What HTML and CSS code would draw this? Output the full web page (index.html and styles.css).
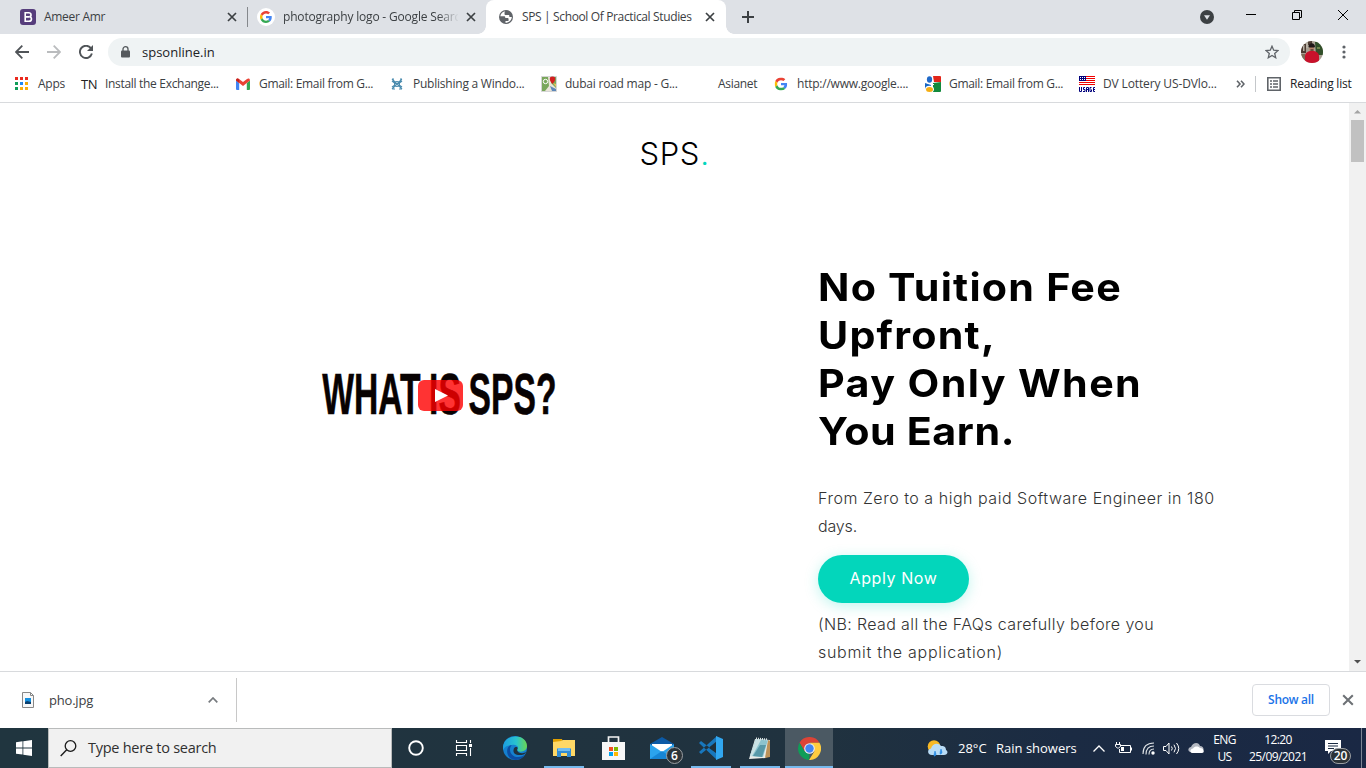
FILE: index.html
```
<!DOCTYPE html>
<html lang="en">
<head>
<meta charset="utf-8">
<title>SPS | School Of Practical Studies</title>
<link rel="stylesheet" href="styles.css">
</head>
<body>
<svg class="defs" width="0" height="0">
  <symbol id="google" viewBox="0 0 48 48">
    <path fill="#ea4335" d="M24 9.500c3.500 0 6.700 1.200 9.200 3.600l6.900-6.900C35.900 2.400 30.500 0 24 0 14.600 0 6.500 5.400 2.600 13.200l8 6.200C12.400 13.700 17.700 9.500 24 9.500z"/>
    <path fill="#4285f4" d="M47 24.500c0-1.600-.2-3.100-.4-4.500H24v9h12.900c-.6 3-2.200 5.500-4.700 7.200l7.700 6C44.400 38 47 31.800 47 24.500z"/>
    <path fill="#fbbc05" d="M10.500 28.600c-.5-1.400-.8-3-.8-4.600s.3-3.100.8-4.600l-8-6.200C.9 16.500 0 20.100 0 24s.9 7.500 2.600 10.800z"/>
    <path fill="#34a853" d="M24 48c6.500 0 11.900-2.100 15.900-5.800l-7.700-6c-2.200 1.500-4.900 2.300-8.200 2.300-6.300 0-11.600-4.200-13.500-9.900l-8 6.200C6.500 42.600 14.600 48 24 48z"/>
  </symbol>
  <symbol id="close" viewBox="0 0 10 10"><path d="M1 1l8 8M9 1l-8 8" stroke="currentColor" stroke-width="1.700" fill="none"/></symbol>
</svg>

<header class="tabstrip">
  <div class="tab">
    <svg class="i16" viewBox="0 0 16 16"><rect width="16" height="16" rx="3" fill="#563d7c"/><path d="M5.200 3.800h3.500c3 0 3 3.700.6 4 3 .3 2.900 4.400-.4 4.400H5.200zM5.200 7.900h3.900" fill="none" stroke="#fff" stroke-width="1.600"/></svg>
    <span class="tab-title first">Ameer Amr</span>
    <svg class="x"><use href="#close"/></svg>
  </div>
  <div class="tab second">
    <span class="disc"><svg><use href="#google"/></svg></span>
    <span class="tab-title fade">photography logo - Google Search</span>
    <svg class="x"><use href="#close"/></svg>
  </div>
  <div class="tab active">
    <svg class="i14" viewBox="0 0 24 24"><circle cx="12" cy="12" r="12" fill="#5f6368"/><path d="M11 2.300c-4.500.6-8 3.700-8.800 8.200h6.500c1.300 0 2 .8 2 2v1.300h4c1 0 1.700.8 1.700 1.800v1.800c0 1-.8 1.600-1.800 1.600h-3.500v3c5.500 0 10.700-4 10.900-10h-2.700c-1.200 0-1.800-.7-1.800-1.800V8.700h-6c-1.300 0-2-.8-2-2V4.500c0-1 .6-1.500 1.500-2.200z" fill="#fff"/></svg>
    <span class="tab-title">SPS | School Of Practical Studies</span>
    <svg class="x"><use href="#close"/></svg>
  </div>
  <svg class="plus" viewBox="0 0 12 12"><path d="M6 0v12M0 6h12" stroke="#3c4043" stroke-width="2"/></svg>
  <div class="winctl">
    <svg width="14" height="14" viewBox="0 0 14 14"><circle cx="7" cy="7" r="7" fill="#3c4043"/><path d="M4 5.300h6L7 9.800z" fill="#dee1e6"/></svg>
    <svg width="10" height="11" viewBox="0 0 10 11"><path d="M0 5.500h10" stroke="#000"/></svg>
    <svg width="10" height="10" viewBox="0 0 10 10"><path d="M.5 2.500h7v7h-7zM2.500 2.500v-2h7v7h-2" fill="none" stroke="#000"/></svg>
    <svg width="10" height="10" viewBox="0 0 10 10"><path d="M0 0l10 10M10 0L0 10" stroke="#000"/></svg>
  </div>
</header>

<nav class="toolbar">
  <svg class="nav" viewBox="0 0 14 14"><path d="M14 7H1M7.300.7L1 7l6.300 6.300" fill="none" stroke="#505458" stroke-width="1.800"/></svg>
  <svg class="nav" viewBox="0 0 14 14"><path d="M0 7h13M6.700.7L13 7l-6.300 6.300" fill="none" stroke="#babcbe" stroke-width="1.800"/></svg>
  <svg class="nav" viewBox="0 0 14 14"><path d="M12.100 3.500A6.100 6.100 0 1 0 12.900 8.500" fill="none" stroke="#505458" stroke-width="1.900"/><path d="M14 0v6H8z" fill="#505458"/></svg>
  <div class="omnibox">
    <svg class="lock" viewBox="0 0 9 12"><rect y="4.500" width="9" height="7" rx="1" fill="#55595d"/><path d="M2 5V3a2.500 2.300 0 0 1 5 0v2" fill="none" stroke="#55595d" stroke-width="1.300"/></svg>
    <span class="url">spsonline.in</span>
    <svg class="star" viewBox="0 0 14 14"><path d="M7 1.200l1.700 4 4.300.4-3.300 2.800 1 4.300L7 10.400l-3.700 2.300 1-4.300L1 5.600l4.300-.4z" fill="none" stroke="#5f6368" stroke-width="1.300"/></svg>
  </div>
  <svg class="avatar" viewBox="0 0 22 22"><clipPath id="av"><circle cx="11" cy="11" r="11"/></clipPath><g clip-path="url(#av)"><path fill="#a9a093" d="M0 0h22v22H0z"/><path fill="#4c3b32" d="M0 3h5v9H0zM7 0h4v4H7z"/><path fill="#b9b2a6" d="M2 4h1.500v6H2zM5 2h2v5H5z"/><path fill="#31502a" d="M14 1h8v13h-7z"/><path fill="#71864c" d="M16 6h3v2h-3z"/><path fill="#b88369" d="M8.500 5h4.500v6H8.500z"/><path fill="#211819" d="M7.500 6c0-5 6.500-5 6.500 0l-1 .5H8.500zM9.500 8.500h3v1h-3z"/><path fill="#c9112b" d="M4 15c0-3 3-4.500 5-5h4c2 .5 5 2 5 5v7H4z"/><path fill="#7d6d58" d="M0 13h4v9H0z"/></g></svg>
  <svg class="dots" viewBox="0 0 4 14"><g fill="#5f6368"><circle cx="2" cy="2" r="1.600"/><circle cx="2" cy="7" r="1.600"/><circle cx="2" cy="12" r="1.600"/></g></svg>
</nav>

<div class="bookmarks">
  <a><svg class="i16" viewBox="0 0 16 16"><path fill="#ea2a1e" d="M1 1h3v3H1zM6 1h3v3H6zM11 1h3v3h-3z"/><path fill="#109d58" d="M1 6h3v3H1zM1 11h3v3H1z"/><path fill="#1e88f5" d="M6 6h3v3H6z"/><path fill="#fbad05" d="M11 6h3v3h-3zM6 11h3v3H6zM11 11h3v3h-3z"/></svg><span>Apps</span></a>
  <a><span class="tn">TN</span><span class="tight">Install the Exchange...</span></a>
  <a class="gmail"><svg class="i16" viewBox="0 0 16 16"><path fill="#4285f4" d="M0 4.500L3.200 7v7H1a1 1 0 0 1-1-1z"/><path fill="#34a853" d="M14 4.500L10.800 7v7H13a1 1 0 0 0 1-1z"/><path fill="#ea4335" d="M0 4.500C0 2 2 2 3 3l4 3 4-3c1-1 3-1 3 1.500L10.800 7 7 10 3.200 7z"/><path fill="#c5221f" d="M0 4.500C0 2.500 2 2 3.200 3.200V7L0 4.500z"/></svg><span class="tight">Gmail: Email from G...</span></a>
  <a><svg class="i16" viewBox="0 0 16 16"><g fill="none" stroke="#4b8caf" stroke-width="1.100"><path d="M3 3l10 10M13 3L3 13M3 5q5 5 10 0M3 11q5-5 10 0M3 3h2M13 3h-2M3 13h3M10 13h3"/><circle cx="8" cy="8" r="2.500"/></g></svg><span>Publishing a Windo...</span></a>
  <a><svg class="i16" viewBox="0 0 16 16"><path fill="#79a75b" d="M1 1h14v14H1z"/><path fill="#e9e4d8" d="M7 1h4l-1 6 5 5v3H9L4 15l4-5z"/><path fill="#5d87b8" d="M9 10l6 3v2h-4z"/><path fill="#e9c25a" d="M12 7l3 1v3z"/><circle cx="4.500" cy="5.500" r="2.200" fill="none" stroke="#fff"/><path fill="#d31f1f" d="M11.500 8C10 6 8.800 5 8.800 3a2.700 2.700 0 0 1 5.400 0c0 2-1.200 3-2.700 5z"/><path d="M.5.500h15v15H.5z" fill="none" stroke="#aaa" stroke-width=".5"/></svg><span>dubai road map - G...</span></a>
  <a><span class="i16"></span><span class="tight">Asianet</span></a>
  <a><svg class="i16" viewBox="-6 -6 60 60"><use href="#google" width="48" height="48"/></svg><span>http://www.google....</span></a>
  <a><svg class="i16" viewBox="0 0 16 16"><path fill="#fff" d="M0 0h16v16H0z"/><path fill="#1967c4" d="M0 7l6 2-1 5H0z"/><path fill="#e22519" d="M8 0h7a1 1 0 0 1 1 1v5H9z"/><path fill="#128a3c" d="M8 7l8-1v9a1 1 0 0 1-1 1H8z"/><ellipse cx="4.500" cy="4" rx="3.600" ry="4" fill="#fff"/><ellipse cx="4.500" cy="3.500" rx="2.600" ry="3.300" fill="#2069c8"/><ellipse cx="4.500" cy="13.300" rx="4.500" ry="3.500" fill="#fff"/><ellipse cx="4.500" cy="13.500" rx="3.500" ry="2.500" fill="#f5ae13"/><path stroke="#fff" d="M6 8.500h3"/></svg><span class="tight">Gmail: Email from G...</span></a>
  <a><svg class="i16" viewBox="0 0 16 16"><path fill="#fff" d="M0 0h16v10H0z"/><path stroke="#f00000" d="M0 .5h16M0 2.500h16M0 4.500h16M0 6.500h16M0 8.500h16"/><path fill="#00007c" d="M0 0h7v5H0z"/><path stroke="#fff" stroke-dasharray="1 1" d="M1 1.500h6M1 3.500h6"/><path d="M.5 11v4.500h2V11M6 11.500H4.500v2H6v2H4M7.500 16v-4.500h2V16M7.500 13.500h2M12.500 11.500h-1.500v4h1.500v-2M16 11.500h-1.500v4H16M14.500 13.500H16" fill="none" stroke="#00007c"/></svg><span class="lottery">DV Lottery US-DVlo...</span></a>
  <svg class="more" viewBox="0 0 9 8"><path d="M1 .8L4 4 1 7.200M5 .8L8 4 5 7.200" fill="none" stroke="#5f6368" stroke-width="1.600"/></svg>
  <a class="reading"><svg width="14" height="14" viewBox="0 0 14 14"><path d="M.8.800h12.400v12.400H.8z" fill="none" stroke="#5f6368" stroke-width="1.600"/><path d="M3 4h2M6 4h5M3 7h2M6 7h5M3 10h2M6 10h5" stroke="#5f6368" stroke-width="1.500"/></svg><span>Reading list</span></a>
</div>

<main class="viewport">
  <div class="page">
    <div class="brand">SPS<i>.</i></div>
    <div class="hero">
      <div class="video">
        <svg viewBox="0 0 260 80" width="260" height="80">
          <text class="poster" transform="scale(.59 1)" y="57"><tspan x="9">WHAT</tspan> <tspan x="190">IS</tspan> <tspan x="257">SPS?</tspan></text>
          <rect x="101" y="23" width="45" height="31" rx="6" fill="#f00" fill-opacity=".8"/><path d="M118 32l13 6.500-13 6.500z" fill="#fff"/>
        </svg>
      </div>
      <div class="copy">
        <h1><span class="l1">No Tuition Fee</span><span class="l2">Upfront,</span><span class="l3">Pay Only When</span><span class="l4">You Earn.</span></h1>
        <p class="lead">From Zero to a high paid Software Engineer in 180 <br><span class="days">days.</span></p>
        <a class="apply">Apply Now</a>
        <p class="note">(NB: Read all the FAQs carefully before you<br><span class="submit">submit the application)</span></p>
      </div>
    </div>
  </div>
  <div class="scrollbar">
    <svg viewBox="0 0 17 17"><path d="M5 10.500h7L8.500 7z" fill="#a3a3a3"/></svg>
    <div class="thumb"></div>
    <svg viewBox="0 0 17 17"><path d="M5 6h7L8.500 9.500z" fill="#505050"/></svg>
  </div>
</main>

<section class="downloads">
  <div class="file">
    <svg width="12" height="16" viewBox="0 0 12 16"><path d="M.5.500h8l3 3v12H.5z" fill="#f8f8f8" stroke="#888"/><path d="M8.500.500v3h3" fill="none" stroke="#888"/><path d="M3 6h6v6H3z" fill="#1590e0"/><path d="M3 10l2-1 4 1v2H3z" fill="#0b3f6e"/></svg>
    <span class="fname">pho.jpg</span>
    <svg width="10" height="6" viewBox="0 0 10 6"><path d="M.7 5.300L5 1l4.300 4.300" fill="none" stroke="#767a7e" stroke-width="1.700"/></svg>
  </div>
  <button class="showall">Show all</button>
  <svg class="shelf-x"><use href="#close"/></svg>
</section>

<footer class="taskbar">
  <div class="start"><svg width="16" height="16" viewBox="0 0 16 16"><path fill="#fff" d="M0 2.200L6.500 1.300V7.500H0zM7.300 1.200L16 0v7.500H7.300zM0 8.400h6.500v6.200L0 13.700zM7.300 8.400H16V16l-8.700-1.200z"/></svg></div>
  <div class="search"><svg width="17" height="17" viewBox="0 0 17 17"><circle cx="10.500" cy="6" r="5.300" fill="none" stroke="#1b1b1b" stroke-width="1.300"/><path d="M6.700 9.800L.7 16" stroke="#1b1b1b" stroke-width="1.400"/></svg><span>Type here to search</span></div>
  <div class="apps">
    <div class="app"><svg width="16" height="16" viewBox="0 0 16 16"><circle cx="8" cy="8" r="6.800" fill="none" stroke="#fff" stroke-width="1.900"/></svg></div>
    <div class="app"><svg width="18" height="16" viewBox="0 0 18 16"><path d="M1.500 0v2.500h10V0M1.500 16v-2.500h10V16M1.500 5.500h10v5h-10zM15.500 0v3M15.500 8v8" fill="none" stroke="#fff" stroke-width="1.100"/><path d="M14 4h3v3h-3z" fill="#fff"/></svg></div>
    <div class="app edge"><svg width="24" height="24" viewBox="0 0 24 24"><defs><linearGradient id="eb"><stop stop-color="#1b9de2"/><stop offset=".55" stop-color="#29c3cf"/><stop offset="1" stop-color="#6ad751"/></linearGradient></defs><circle cx="12" cy="12" r="12" fill="#1580cf"/><path d="M0 12C0-3 24-3 24 10c0 6-8 7-10 4 3-3-1-6-5-5-4 .5-7 1-9 5z" fill="url(#eb)"/><path d="M9 9c-4 3-2 12 6 12 3 0 6-1 7-3-3 6-9 7-13 5-7-3-6-14 0-14z" fill="#0c4da3"/><path d="M10.500 14c.3-2.500 1.500-3 3.500-3 1 1 .5 2 0 3 1 3.500 6 4 9.500 2-1.500 2.500-4 3-7 3-4 0-6.500-2-6-5z" fill="#20313d"/></svg></div>
    <div class="app run"><svg width="22" height="20" viewBox="0 0 22 20"><path fill="#e2a000" d="M0 1h9l1 3H0z"/><path fill="#ffd866" d="M0 4l8-1 2-1h12v16H0z"/><path fill="#318cd6" d="M4 19v-8l1-1h12l1 1v8h-4v-4H8v4z"/><path fill="#72bdf0" d="M5 10h12v3H5z"/></svg></div>
    <div class="app"><svg width="23" height="24" viewBox="0 0 23 24"><path d="M6.500 8V1h10v7" fill="none" stroke="#f4f4f4" stroke-width="1.700"/><path fill="#f7f7f7" d="M0 6h23v18H0z"/><path fill="#f25022" d="M7 11h4v4H7z"/><path fill="#7fba00" d="M12 11h4v4h-4z"/><path fill="#00a4ef" d="M7 16h4v4H7z"/><path fill="#ffb900" d="M12 16h4v4h-4z"/></svg></div>
    <div class="app mail"><svg width="24" height="22" viewBox="0 0 24 22"><path fill="#0c5aa6" d="M0 7l12-7 12 7v5H0z"/><path fill="#fff" d="M2 7h20v8H2z"/><path fill="#2ba3ed" d="M0 7l12 8 12-8v15H0z"/><path fill="#1685d5" d="M0 22l12-8 12 8z"/></svg><span class="badge">6</span></div>
    <div class="app run"><svg width="24" height="24" viewBox="0 0 24 24"><path fill="#1877bd" d="M0 7l2-2 17 13-1 6zM0 16l2 2L18 5V0z"/><path fill="#31a7f0" d="M17 0l7 3v18l-7 3z"/><path fill="#1f2f3a" d="M17 7v10l-7-5z"/></svg></div>
    <div class="app run"><svg width="24" height="23" viewBox="0 0 24 23"><path fill="#e9ece9" d="M7 2l15 1-4 18-17 1z"/><path fill="#bb9159" d="M20 3l2 1v16l-5 1z"/><path fill="#8cc3ce" d="M8 2l12 1-5 17-13-1z"/><path fill="#5798a8" d="M12 8l6 0-4 12-9-1z"/><path fill="#c9e1e4" d="M8 2L2 19l2 .2L13 3z"/><path d="M8 1.500l12 1" stroke="#e0e6e6" stroke-dasharray="1 1" stroke-width="2"/></svg></div>
    <div class="app run current"><svg width="23" height="23" viewBox="0 0 24 24"><path fill="#db4437" d="M1.600 6A12 12 0 0 1 22.400 6H12L7 15z"/><path fill="#0f9d58" d="M1.600 6L7 15l5 3-.5 6A12 12 0 0 1 1.600 6z"/><path fill="#ffcd40" d="M22.400 6A12 12 0 0 1 11.500 24L17 15l-1-6-4-3z"/><circle cx="12" cy="12" r="5.500" fill="#f1f1f1"/><circle cx="12" cy="12" r="4.400" fill="#4285f4"/></svg></div>
  </div>
  <div class="tray">
    <svg class="weather" width="21" height="17" viewBox="0 0 21 17"><circle cx="7" cy="6.500" r="6.300" fill="#f8b925"/><path fill="#b9dcf6" d="M5 15c-5 0-5-6-1-6.500C5 4 11 2 14 6c4-.5 5 2 5 4 3 2 1 5-2 5z"/><path fill="#2b8de6" d="M8 11q2 4 0 5t0-5M14 9q2 4 0 5t0-5" stroke="#2b8de6" stroke-width=".6"/></svg>
    <span class="deg">28°C</span><span class="rain">Rain showers</span>
    <svg class="up" width="12" height="7" viewBox="0 0 12 7"><path d="M.5 6.500L6 1l5.500 5.500" fill="none" stroke="#fff" stroke-width="1.300"/></svg>
    <svg class="bat" width="17" height="12" viewBox="0 0 17 12"><path d="M6 3.500h9.500v7H4.500V7M16.500 5.500v3M1.500 0v2M4.500 0v2M.5 2.500h5v2l-2 1.500h-1l-2-1.500z" fill="none" stroke="#fff"/><path d="M6 5h3v4H6z" fill="#fff"/></svg>
    <svg class="wifi" width="13" height="13" viewBox="0 0 13 13"><g fill="none" stroke="#dfe3e6" stroke-width="1.100"><path d="M1 12Q1 1 12 1M4 12.500Q4 4 12 4M7 12.500Q7 7 12 7"/></g><circle cx="11" cy="11" r="1.700" fill="#fff"/></svg>
    <svg class="vol" width="17" height="13" viewBox="0 0 17 13"><path d="M.5 4.500h2.500l3-3.500v11L3 8.500H.5zM8.500 4.500q1.500 2 0 4M11 2.700q3 3.800 0 7.600M13.500 1q4.500 5.500 0 11" fill="none" stroke="#fff"/></svg>
    <svg class="cloud" width="16" height="10" viewBox="0 0 16 10"><path fill="#b5b9c2" d="M3 9c-4 0-3-5 0-5C5-1 11-1 12 3c4 0 5 5 1 6z"/><path fill="#fff" d="M5 10c-4 0-3-4 0-4.500 2-3 6-2 7-.5 4 0 5 5 2 5z"/></svg>
    <div class="lang"><span>ENG</span><span>US</span></div>
    <div class="clock"><span>12:20</span><span>25/09/2021</span></div>
    <div class="notes"><svg width="16" height="14" viewBox="0 0 16 14"><path fill="#fff" d="M0 0h16v11H6l-3 3v-3H0z"/><path d="M3 3.500h10M3 6h10M3 8.500h6" stroke="#1b2b42"/></svg><span class="badge">20</span></div>
    <div class="peek"></div>
  </div>
</footer>
</body>
</html>
```
FILE: styles.css
```
* { box-sizing: border-box; }
body { margin: 0; width: 1366px; height: 768px; overflow: hidden; display: flex; flex-direction: column; background: #fff; color: #3c4043; font: 12px/16px "Open Sans", "Noto Sans", sans-serif; }
svg { display: block; flex: none; }
.defs { position: absolute; }
.i16 { width: 16px; height: 16px; flex: none; }
.i14 { width: 14px; height: 14px; }

.tabstrip { height: 34px; background: #dee1e6; display: flex; flex: none; align-items: stretch; }
.tab { display: flex; align-items: center; width: 247px; padding: 0 9px 0 20px; gap: 8px; letter-spacing: -.18px; }
.tab-title { flex: 1; min-width: 0; white-space: nowrap; }
.first { letter-spacing: -.3px; }
.tab .x { width: 10px; height: 10px; color: #3c4043; margin-right: 1px; }
.second { width: 239px; padding: 0 9px 0 10px; position: relative; gap: 8px; }
.second::before { content: ""; position: absolute; left: 0; top: 7px; height: 20px; width: 1px; background: #85888c; }
.disc { width: 18px; height: 18px; border-radius: 50%; background: #fff; display: grid; place-items: center; }
.disc svg { width: 12px; height: 12px; }
.fade { overflow: hidden; -webkit-mask: linear-gradient(90deg, #000 155px, transparent 176px); mask: linear-gradient(90deg, #000 155px, transparent 176px); }
.active { width: 240px; background: #fff; border-radius: 8px 8px 0 0; padding: 0 10px 0 13px; position: relative; gap: 9px; letter-spacing: -.36px; }
.active::before, .active::after { content: ""; position: absolute; bottom: 0; width: 8px; height: 8px; }
.active::before { left: -8px; background: radial-gradient(circle at 0 0, transparent 7.500px, #fff 8px); }
.active::after { right: -8px; background: radial-gradient(circle at 100% 0, transparent 7.500px, #fff 8px); }
.plus { width: 12px; height: 12px; margin: 11px 0 0 16px; }
.winctl { margin-left: auto; display: flex; align-items: center; padding: 0 18px 5px 0; gap: 36px; }
.winctl svg:first-child { margin: 5px -4px 0 0; }

.toolbar { height: 36px; flex: none; display: flex; align-items: center; padding-left: 15px; }
.nav { width: 14px; height: 14px; margin-right: 18px; }
.omnibox { width: 1182px; height: 28px; border-radius: 14px; background: #eff3f4; margin-left: -3px; display: flex; align-items: center; padding: 0 11px 0 13px; }
.lock { width: 9px; height: 12px; margin-right: 12px; }
.url { font-size: 13px; color: #202124; }
.star { width: 14px; height: 14px; margin-left: auto; }
.avatar { width: 22px; height: 22px; margin-left: 11px; }
.dots { width: 4px; height: 14px; margin-left: 19px; }

.bookmarks { height: 33px; flex: none; border-bottom: 1px solid #d8dadd; padding: 0 0 5px 14px; display: grid; grid-template-columns: 67px 155px 153px 152px 153px 79px 152px 154px 157px 18px 1fr; align-items: center; letter-spacing: -.23px; }
.bookmarks a { display: flex; align-items: center; gap: 8px; white-space: nowrap; }
.bookmarks .gmail { gap: 7px; }
.tight { letter-spacing: -.31px; }
.lottery { letter-spacing: -.13px; }
.tn { width: 16px; font-size: 13px; line-height: 16px; letter-spacing: -.4px; color: #222; }
.more { width: 9px; height: 8px; }
.bookmarks .reading { height: 16px; border-left: 1px solid #c4c7ca; padding-left: 11px; color: #202124; margin-left: 1px; gap: 9px; }

.viewport { height: 568px; flex: none; display: flex; overflow: hidden; }
.page { width: 1349px; font-family: "Inter", sans-serif; }
.brand { text-align: center; padding-top: 26px; height: 116px; font-size: 31px; line-height: 50px; font-weight: 300; letter-spacing: .7px; color: #000; }
.brand i { font-style: normal; color: #03d6bb; }
.hero { display: flex; }
.video { width: 818px; padding: 138px 0 0 317px; }
.poster { font: bold 57px "Liberation Sans", sans-serif; fill: #080202; stroke: #080202; stroke-width: .6px; }
.copy { width: 420px; }
h1 { margin: 44px 0 0; font-size: 38.500px; line-height: 48px; color: #000; font-weight: 700; transform: scaleX(1.07); transform-origin: 0 0; }
h1 span { display: block; white-space: nowrap; }
.l1 { letter-spacing: 1.150px; }
.l2 { letter-spacing: 1.150px; }
.l3 { letter-spacing: 1.300px; }
.l4 { letter-spacing: .56px; }
p { margin: 0; font-size: 16px; line-height: 27.500px; font-weight: 300; color: #333; white-space: nowrap; }
.lead { padding-top: 30px; letter-spacing: .52px; }
.days { letter-spacing: -.17px; }
.apply { display: flex; align-items: center; justify-content: center; margin-top: 15px; padding-bottom: 2px; width: 151px; height: 48px; border-radius: 24px; background: #03d6bb; color: #fff; font-size: 16px; letter-spacing: .6px; box-shadow: 0 3px 14px rgba(3, 214, 187, .25); }
.note { padding-top: 8px; letter-spacing: .37px; }
.submit { letter-spacing: .71px; }
.scrollbar { width: 17px; background: #f1f1f1; display: flex; flex-direction: column; }
.scrollbar svg { width: 17px; height: 17px; }
.thumb { width: 13px; height: 42px; margin: 0 2px auto; background: #c1c1c1; }

.downloads { height: 57px; flex: none; border-top: 1px solid #d8dadd; display: flex; align-items: center; padding-bottom: 1px; }
.file { width: 237px; height: 44px; border-right: 1px solid #c8c8c8; padding: 0 18px 0 22px; display: flex; align-items: center; }
.fname { margin: 1px auto 0 15px; font-size: 13px; letter-spacing: -.2px; }
.showall { margin-left: auto; width: 78px; height: 32px; border: 1px solid #dadce0; border-radius: 4px; background: #fff; color: #1a73e8; font: 600 12px "Open Sans", sans-serif; letter-spacing: -.28px; padding: 0 0 1px; }
.shelf-x { width: 12px; height: 12px; margin: 0 12px; color: #6d7175; }

.taskbar { height: 40px; flex: none; display: flex; color: #fff; background: linear-gradient(90deg, #20353f 0, #20323f 60%, #1b2b43 78%, #1a2844); }
.start { width: 48px; display: grid; place-items: center; }
.search { width: 344px; background: #f1f1f1; border: 1px solid #b9bbbb; color: #303030; display: flex; align-items: center; padding-left: 11px; gap: 11px; font-size: 14.500px; letter-spacing: -.26px; }
.apps { display: flex; }
.app { width: 48px; margin-right: 1px; display: grid; place-items: center; position: relative; }
.app:nth-child(1) { margin-right: 0; }
.edge { margin-left: 2px; }
.run::after { content: ""; position: absolute; bottom: 0; left: 4px; right: 4px; height: 2px; background: #76b9ed; }
.current { background: #4b5963; }
.current::after { left: 0; right: 0; }
.badge { position: absolute; display: grid; place-items: center; background: #2c3338; border: 1px solid #9b9fa3; border-radius: 9px; color: #fff; font-size: 12px; font-weight: 600; line-height: 14px; }
.mail .badge { width: 17px; height: 17px; left: 28px; top: 19px; }
.tray { margin-left: auto; display: flex; align-items: center; width: 439px; font-size: 13px; }
.deg { margin-left: 10px; width: 29px; }
.rain { margin-left: 9px; width: 81px; white-space: nowrap; }
.up { margin-left: 16px; }
.bat { margin-left: 10px; }
.wifi { margin-left: 10px; }
.vol { margin-left: 8px; }
.cloud { margin-left: 8px; }
.lang, .clock { display: flex; flex-direction: column; align-items: center; line-height: 17px; font-size: 12px; letter-spacing: -.57px; }
.lang { width: 23px; margin-left: 9px; }
.clock { width: 58px; margin-left: 13px; }
.notes { margin-left: 18px; position: relative; }
.notes svg { margin-top: -2px; }
.notes .badge { width: 21px; height: 16px; left: 5px; top: 6px; }
.peek { width: 1px; height: 40px; background: #7c8594; margin-left: auto; margin-right: 4px; }
```
